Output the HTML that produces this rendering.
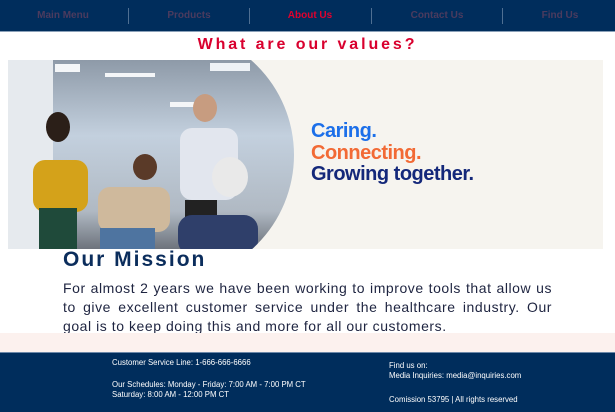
<!DOCTYPE html>
<html><head><meta charset="utf-8"><style>
*{margin:0;padding:0;box-sizing:border-box}
body{width:615px;height:412px;overflow:hidden;background:#fff;font-family:"Liberation Sans",Arial,sans-serif;position:relative}
.nav{position:absolute;left:0;top:0;width:615px;height:32px;background:#002d5c;border-bottom:1px solid #8aa0b8}
.nav span{position:absolute;top:10px;font-size:10px;font-weight:bold;color:#4b3b5e;transform:translateX(-50%);white-space:nowrap}
.nav i{position:absolute;top:8px;width:1px;height:16px;background:#4f6f92}
h1{position:absolute;top:36px;left:0;width:615px;text-align:center;font-size:16px;letter-spacing:2.9px;color:#d9002e;font-weight:bold;white-space:nowrap}
.banner{position:absolute;left:8px;top:60px;width:595px;height:189px;background:#f6f4ef}
.tag{position:absolute;left:303px;top:61px;font-size:20px;font-weight:bold;line-height:21.5px;letter-spacing:-0.5px}
h2{position:absolute;left:63px;top:248px;font-size:21px;letter-spacing:2px;color:#0b2d5c}
p.m{position:absolute;left:63px;top:279px;width:489px;font-size:14px;line-height:19px;letter-spacing:0.55px;color:#1e2440;text-align:justify}
.pink{position:absolute;left:0;top:333px;width:615px;height:19px;background:#fcf1ee}
.foot{position:absolute;left:0;top:352px;width:615px;height:60px;background:#002d5c;border-top:1px solid #6d88a8;color:#fff;font-size:7.8px;line-height:10px}
.foot div{position:absolute}
</style></head><body>
<div class="nav">
<span style="left:63px">Main Menu</span><i style="left:128px"></i>
<span style="left:189px">Products</span><i style="left:249px"></i>
<span style="left:310px;color:#e0002d">About Us</span><i style="left:371px"></i>
<span style="left:437px">Contact Us</span><i style="left:502px"></i>
<span style="left:560px">Find Us</span>
</div>
<h1>What are our values?</h1>
<div class="banner">
<svg width="595" height="189" viewBox="8 60 595 189" style="position:absolute;left:0;top:0">
<defs>
<clipPath id="c"><rect x="8" y="60" width="160" height="189"/><circle cx="167.6" cy="155" r="126.4"/></clipPath>
<linearGradient id="g" x1="0" y1="0" x2="0" y2="1"><stop offset="0" stop-color="#8e9aa8"/><stop offset=".4" stop-color="#c3d0de"/><stop offset=".8" stop-color="#b0b9c3"/><stop offset="1" stop-color="#6d737c"/></linearGradient>
</defs>
<g clip-path="url(#c)">
<rect x="8" y="60" width="300" height="189" fill="url(#g)"/>
<rect x="8" y="60" width="45" height="189" fill="#e6eaee"/>
<rect x="55" y="64" width="25" height="8" fill="#f4f6f8"/><rect x="105" y="73" width="50" height="4" fill="#f4f6f8"/>
<rect x="210" y="63" width="40" height="8" fill="#eef2f6"/><rect x="170" y="102" width="25" height="5" fill="#f4f6f8"/>
<ellipse cx="58" cy="127" rx="12" ry="15" fill="#2b1f18"/>
<rect x="33" y="160" width="55" height="52" rx="12" fill="#d4a21a"/>
<rect x="39" y="208" width="38" height="41" fill="#1f4a3a"/>
<ellipse cx="145" cy="167" rx="12" ry="13" fill="#5a3a28"/>
<rect x="98" y="187" width="72" height="45" rx="12" fill="#cfb99c"/>
<rect x="100" y="228" width="55" height="21" fill="#4e74a0"/>
<ellipse cx="205" cy="108" rx="12" ry="14" fill="#c79c80"/>
<rect x="180" y="128" width="58" height="72" rx="12" fill="#e2e6ee"/>
<rect x="185" y="200" width="32" height="49" fill="#222"/>
<ellipse cx="230" cy="177" rx="18" ry="20" fill="#e9e9e9"/>
<rect x="178" y="215" width="80" height="40" rx="14" fill="#2f3f6a"/>
</g>
</svg>
<div class="tag"><div style="color:#1c6fe9">Caring.</div><div style="color:#f26a35">Connecting.</div><div style="color:#14287a">Growing together.</div></div>
</div>
<h2>Our Mission</h2>
<p class="m">For almost 2 years we have been working to improve tools that allow us to give excellent customer service under the healthcare industry. Our goal is to keep doing this and more for all our customers.</p>
<div class="pink"></div>
<div class="foot">
<div style="left:112px;top:5px">Customer Service Line: 1-666-666-6666</div>
<div style="left:112px;top:27px">Our Schedules: Monday - Friday: 7:00 AM - 7:00 PM CT<br>Saturday: 8:00 AM - 12:00 PM CT</div>
<div style="left:389px;top:8px">Find us on:<br>Media Inquiries: media@inquiries.com</div>
<div style="left:389px;top:42px">Comission 53795 | All rights reserved</div>
</div>
</body></html>
